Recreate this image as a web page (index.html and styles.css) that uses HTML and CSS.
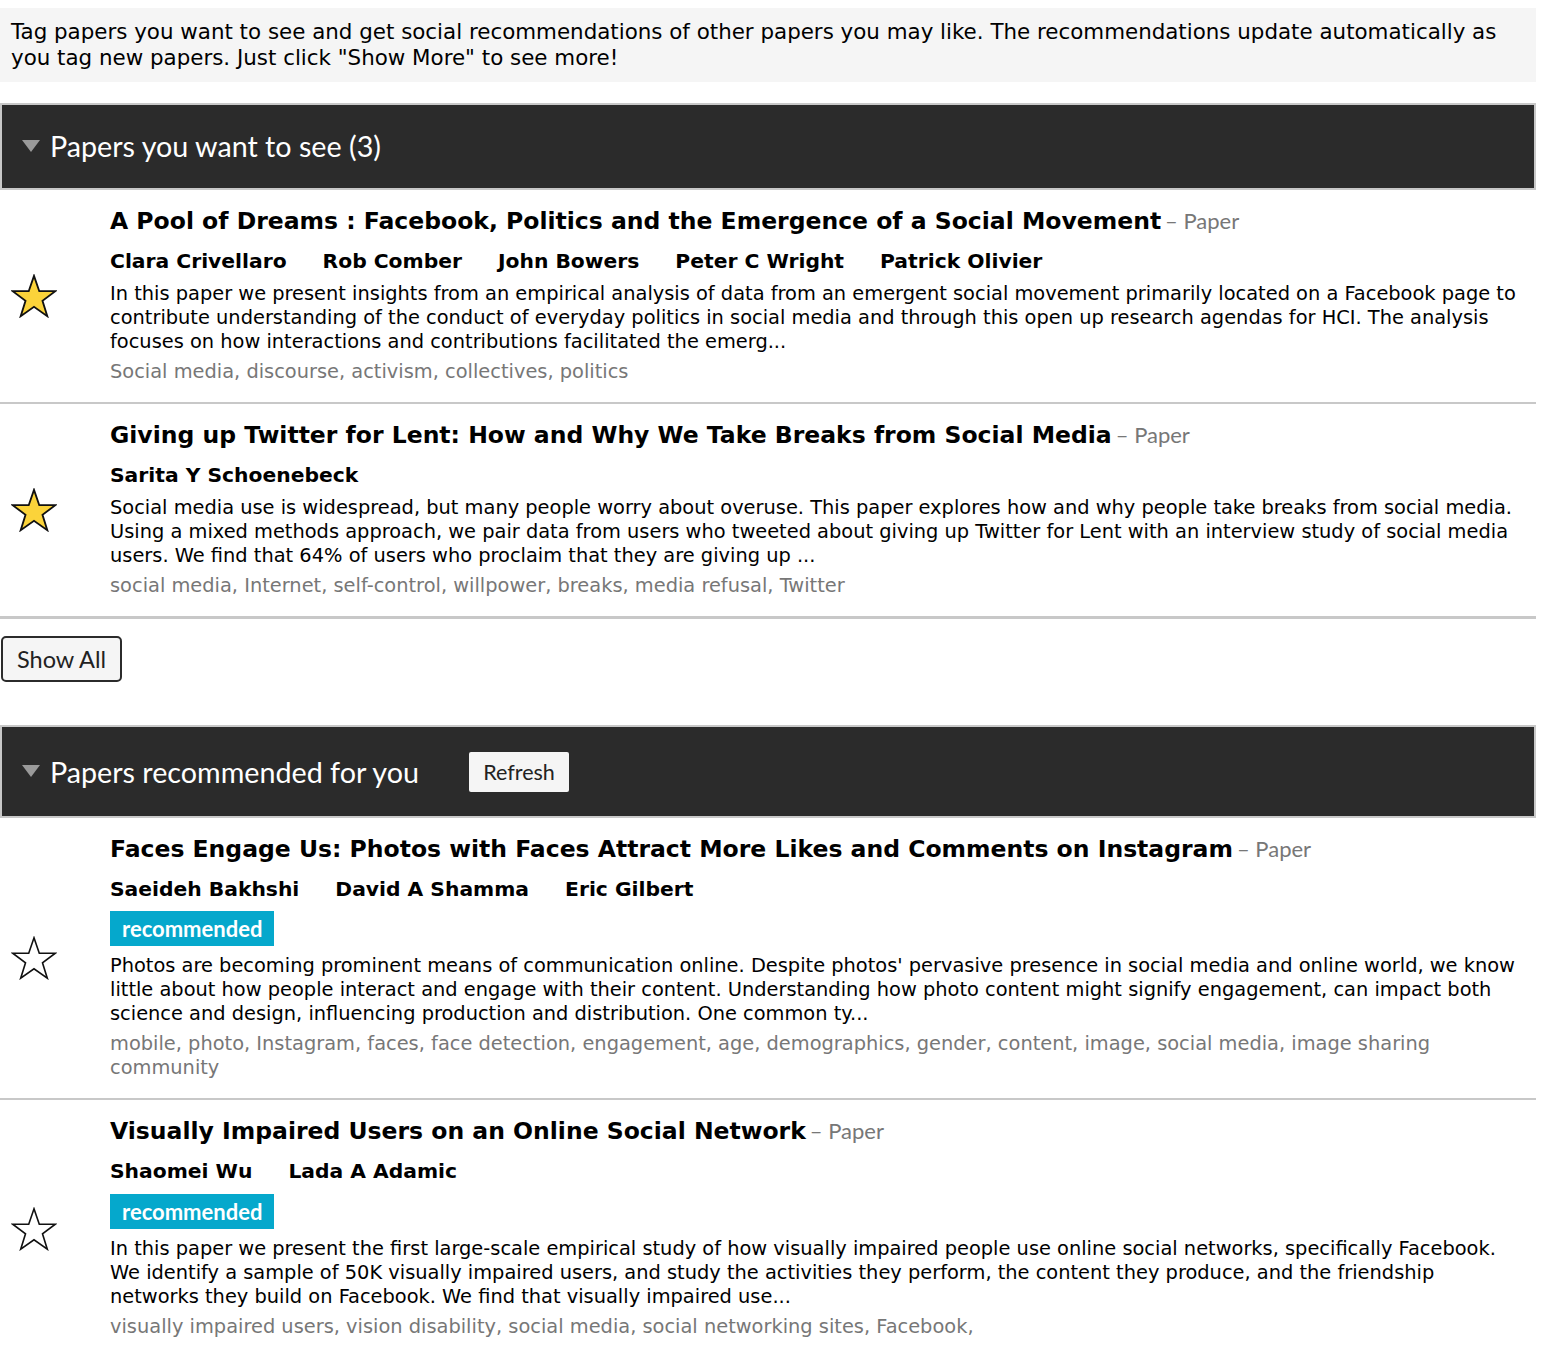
FILE: index.html
```html
<!DOCTYPE html>
<html>
<head>
<meta charset="utf-8">
<link rel="stylesheet" href="styles.css">
</head>
<body>
<div class="page">
  <div class="intro">Tag papers you want to see and get social recommendations of other papers you may like. The recommendations update automatically as you tag new papers. Just click "Show More" to see more!</div>

  <div class="section-head">
    <span class="tri"></span>
    <span class="head-title">Papers you want to see (3)</span>
  </div>
  <div class="list">
    <div class="item">
      <div class="star-col">
        <svg class="star" viewBox="0 0 100 96"><polygon class="star-fill" points="50,4 61.5,37.5 96.5,37.5 68.5,58.5 79,92 50,71.5 21,92 31.5,58.5 3.5,37.5 38.5,37.5"/></svg>
      </div>
      <div class="body">
        <div class="title">A Pool of Dreams : Facebook, Politics and the Emergence of a Social Movement<span class="kind">– Paper</span></div>
        <div class="authors"><span>Clara Crivellaro</span><span>Rob Comber</span><span>John Bowers</span><span>Peter C Wright</span><span>Patrick Olivier</span></div>
        <div class="abstract">In this paper we present insights from an empirical analysis of data from an emergent social movement primarily located on a Facebook page to contribute understanding of the conduct of everyday politics in social media and through this open up research agendas for HCI. The analysis focuses on how interactions and contributions facilitated the emerg...</div>
        <div class="tags">Social media, discourse, activism, collectives, politics</div>
      </div>
    </div>
    <div class="item last">
      <div class="star-col">
        <svg class="star" viewBox="0 0 100 96"><polygon class="star-fill" points="50,4 61.5,37.5 96.5,37.5 68.5,58.5 79,92 50,71.5 21,92 31.5,58.5 3.5,37.5 38.5,37.5"/></svg>
      </div>
      <div class="body">
        <div class="title">Giving up Twitter for Lent: How and Why We Take Breaks from Social Media<span class="kind">– Paper</span></div>
        <div class="authors"><span>Sarita Y Schoenebeck</span></div>
        <div class="abstract">Social media use is widespread, but many people worry about overuse. This paper explores how and why people take breaks from social media. Using a mixed methods approach, we pair data from users who tweeted about giving up Twitter for Lent with an interview study of social media users. We find that 64% of users who proclaim that they are giving up ...</div>
        <div class="tags">social media, Internet, self-control, willpower, breaks, media refusal, Twitter</div>
      </div>
    </div>
  </div>
  <button class="show-all">Show All</button>

  <div class="section-head tall">
    <span class="tri"></span>
    <span class="head-title">Papers recommended for you</span>
    <button class="refresh">Refresh</button>
  </div>
  <div class="list">
    <div class="item">
      <div class="star-col">
        <svg class="star" viewBox="0 0 100 96"><polygon class="star-empty" points="50,4 61.5,37.5 96.5,37.5 68.5,58.5 79,92 50,71.5 21,92 31.5,58.5 3.5,37.5 38.5,37.5"/></svg>
      </div>
      <div class="body">
        <div class="title">Faces Engage Us: Photos with Faces Attract More Likes and Comments on Instagram<span class="kind">– Paper</span></div>
        <div class="authors"><span>Saeideh Bakhshi</span><span>David A Shamma</span><span>Eric Gilbert</span></div>
        <div class="badge">recommended</div>
        <div class="abstract">Photos are becoming prominent means of communication online. Despite photos' pervasive presence in social media and online world, we know little about how people interact and engage with their content. Understanding how photo content might signify engagement, can impact both science and design, influencing production and distribution. One common ty...</div>
        <div class="tags">mobile, photo, Instagram, faces, face detection, engagement, age, demographics, gender, content, image, social media, image sharing community</div>
      </div>
    </div>
    <div class="item">
      <div class="star-col">
        <svg class="star" viewBox="0 0 100 96"><polygon class="star-empty" points="50,4 61.5,37.5 96.5,37.5 68.5,58.5 79,92 50,71.5 21,92 31.5,58.5 3.5,37.5 38.5,37.5"/></svg>
      </div>
      <div class="body">
        <div class="title">Visually Impaired Users on an Online Social Network<span class="kind">– Paper</span></div>
        <div class="authors"><span>Shaomei Wu</span><span>Lada A Adamic</span></div>
        <div class="badge second">recommended</div>
        <div class="abstract">In this paper we present the first large-scale empirical study of how visually impaired people use online social networks, specifically Facebook. We identify a sample of 50K visually impaired users, and study the activities they perform, the content they produce, and the friendship networks they build on Facebook. We find that visually impaired use...</div>
        <div class="tags">visually impaired users, vision disability, social media, social networking sites, Facebook,</div>
      </div>
    </div>
  </div>
</div>
</body>
</html>
```

FILE: styles.css
```css
html, body {
  margin: 0;
  padding: 0;
  background: #fff;
}
.page {
  padding: 8px 8px 0 0;
  font-family: "DejaVu Sans", sans-serif;
  color: #000;
}
.intro {
  background: #f5f5f5;
  padding: 11px 16px 11px 11px;
  font-size: 21.4px;
  line-height: 26px;
  margin-bottom: 21px;
}
.section-head {
  display: flex;
  align-items: center;
  background: #2b2b2b;
  border: 2px solid #c8c8c8;
  padding: 24px 0 24px 20px;
}
.section-head.tall {
  padding: 25px 0 24px 20px;
}
.tri {
  width: 0;
  height: 0;
  border-left: 9px solid transparent;
  border-right: 9px solid transparent;
  border-top: 12px solid #9a9a9a;
  margin-right: 10px;
  margin-top: -2px;
}
.head-title {
  font-family: Lato, "Open Sans", sans-serif;
  color: #fff;
  font-size: 28.7px;
  line-height: 35px;
}
.refresh {
  margin-left: 50px;
  height: 40px;
  width: 100px;
  background: #f5f5f5;
  border: none;
  border-radius: 2px;
  font-family: Lato, "Open Sans", sans-serif;
  font-size: 21.5px;
  color: #222;
  padding: 0;
}
.item {
  display: flex;
  border-bottom: 2px solid #c8c8c8;
}
.item.last {
  border-bottom-width: 3px;
}
.star-col {
  width: 110px;
  flex: none;
  display: flex;
  align-items: center;
}
.star {
  width: 46px;
  height: 44px;
  margin-left: 11px;
}
.star-fill {
  fill: #fbd33a;
  stroke: #111;
  stroke-width: 4;
  stroke-linejoin: miter;
}
.star-empty {
  fill: #fff;
  stroke: #111;
  stroke-width: 3.5;
  stroke-linejoin: miter;
}
.body {
  flex: 1;
  padding: 12px 14px 18px 0;
}
.title {
  font-weight: bold;
  font-size: 23.5px;
  line-height: 38px;
}
.kind {
  font-family: Lato, "Open Sans", sans-serif;
  font-weight: normal;
  font-size: 22px;
  color: #777;
  margin-left: 4px;
}
.authors {
  display: flex;
  gap: 36px;
  font-weight: bold;
  font-size: 20.3px;
  line-height: 42px;
}
.badge {
  display: inline-block;
  background: #05a8cc;
  color: #fff;
  font-family: Lato, "Open Sans", sans-serif;
  font-weight: bold;
  font-size: 22px;
  line-height: 35px;
  padding: 0 12px;
  margin-top: 1px;
  margin-bottom: 8px;
}
.badge.second {
  margin-top: 2px;
}
.abstract {
  font-size: 19.4px;
  line-height: 24px;
}
.tags {
  font-size: 19.4px;
  line-height: 24px;
  color: #777;
  margin-top: 6px;
}
.show-all {
  display: block;
  margin: 17px 0 43px 1px;
  width: 121px;
  height: 46px;
  background: #f5f5f5;
  border: 2px solid #2b2b2b;
  border-radius: 5px;
  font-family: Lato, "Open Sans", sans-serif;
  font-size: 23.5px;
  color: #222;
  padding: 0;
}
```
